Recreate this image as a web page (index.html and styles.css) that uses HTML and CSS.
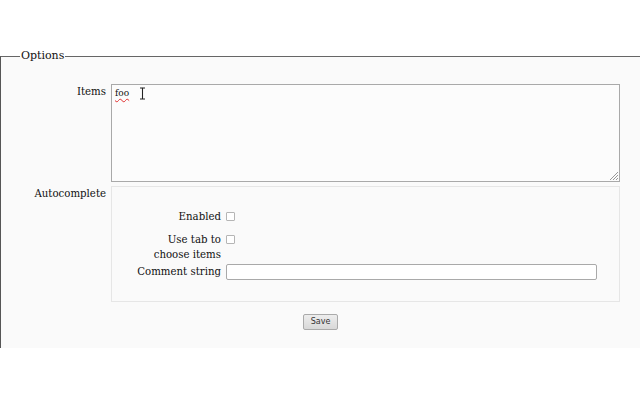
FILE: index.html
```html
<!DOCTYPE html>
<html>
<head>
<meta charset="utf-8">
<link rel="stylesheet" href="styles.css">
</head>
<body>
<div class="page">
  <fieldset class="options">
    <legend class="legend">Options</legend>
    <div class="form">
      <div class="label items-label">Items</div>
      <div class="field">
        <div class="textarea"><span class="spell">foo</span><svg class="ibeam" width="7" height="13" viewBox="0 0 7 13"><path d="M1 1h2l.5.5.5-.5h2M3.5 1.5v10M1 12h2l.5-.5.5.5h2" fill="none" stroke="#fff" stroke-width="2.6"/><path d="M1 1h2l.5.5.5-.5h2M3.5 1.5v10M1 12h2l.5-.5.5.5h2" fill="none" stroke="#222" stroke-width="1.1"/></svg><span class="grip"></span></div>
      </div>
      <div class="label auto-label">Autocomplete</div>
      <div class="field">
        <div class="autobox">
          <div class="subform">
            <div class="sublabel">Enabled</div>
            <div class="subfield"><span class="check"></span></div>
            <div class="sublabel">Use tab to<br>choose items</div>
            <div class="subfield"><span class="check"></span></div>
            <div class="sublabel comment-label">Comment string</div>
            <div class="subfield comment-field"><span class="input"></span></div>
          </div>
        </div>
      </div>
    </div>
    <div class="actions"><span class="button">Save</span></div>
  </fieldset>
</div>
</body>
</html>
```
FILE: styles.css
```css
html, body {
  margin: 0;
  padding: 0;
  background: #ffffff;
}
body {
  font-family: "DejaVu Serif", serif;
  font-size: 10.2px;
  color: #111;
}
.page {
  padding-top: 49px;
}
.options {
  margin: 0;
  padding: 0 0 18px 0;
  border: none;
  border-top: 1px solid #666;
  border-left: 1px solid #555;
  background: #fafafa;
  min-height: 273px;
  box-sizing: border-box;
}
.legend {
  margin-left: 19px;
  padding: 0 1px;
  font-size: 11px;
  line-height: 14px;
}
.form {
  display: grid;
  grid-template-columns: 105px 509px;
  column-gap: 5px;
  row-gap: 4px;
  margin-top: 21px;
}
.label {
  text-align: right;
  line-height: 14px;
}
.items-label {
  padding-top: 1px;
}
.auto-label {
  padding-top: 1px;
}
.textarea {
  position: relative;
  border: 1px solid #a9a9a9;
  background: #fcfcfc;
  padding: 2px 3px;
  box-sizing: border-box;
  height: 98px;
}
.spell {
  font-size: 9px;
  line-height: 12px;
  text-decoration: underline wavy #e03030;
  text-decoration-thickness: 1px;
  text-underline-offset: 2px;
}
.ibeam {
  position: absolute;
  left: 27px;
  top: 2px;
}
.grip {
  position: absolute;
  right: 1px;
  bottom: 1px;
  width: 8px;
  height: 8px;
  background: linear-gradient(135deg, transparent 0 45%, #999 45% 52%, transparent 52% 65%, #999 65% 72%, transparent 72% 85%, #999 85% 92%, transparent 92%);
}
.autobox {
  border: 1px solid #e6e6e6;
  height: 116px;
  box-sizing: border-box;
  padding-top: 22px;
}
.subform {
  display: grid;
  grid-template-columns: 109px auto;
  column-gap: 5px;
  row-gap: 8px;
  align-items: start;
}
.sublabel {
  text-align: right;
  line-height: 15px;
}
.subfield {
  display: flex;
  align-items: flex-start;
  padding-top: 3px;
}
.check {
  width: 7px;
  height: 7px;
  border: 1px solid #b5b5b5;
  border-radius: 1px;
  background: #fff;
}
.comment-label {
  margin-top: -6px;
}
.comment-field {
  margin-top: -6px;
  padding-top: 0;
}
.input {
  width: 369px;
  height: 14px;
  border: 1px solid #a9a9a9;
  border-radius: 2px;
  background: #fff;
}
.actions {
  display: flex;
  justify-content: center;
  margin-top: 12px;
}
.button {
  font-family: "DejaVu Sans", sans-serif;
  font-size: 8px;
  line-height: 14px;
  padding: 0 7px;
  border: 1px solid #aaa;
  border-radius: 2px;
  background: linear-gradient(#ededed, #d8d8d8);
  color: #333;
}
```
